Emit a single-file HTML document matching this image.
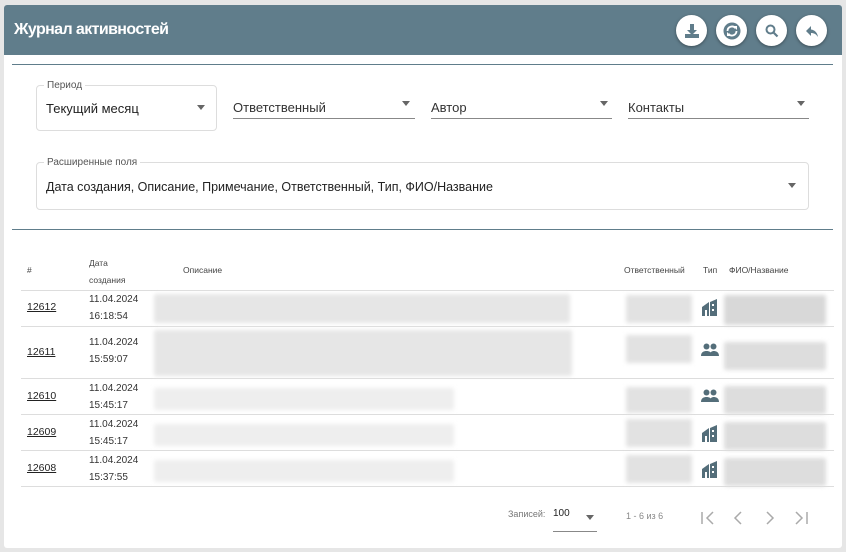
<!DOCTYPE html>
<html><head><meta charset="utf-8"><style>
*{box-sizing:border-box;margin:0;padding:0}
body{width:846px;height:552px;background:#e6e6e6;font-family:"Liberation Sans",sans-serif;position:relative;overflow:hidden;color:#222}
.card{position:absolute;left:4px;top:5px;width:838px;height:543px;background:#fff;border-radius:3px;overflow:hidden}
.hdr{position:absolute;left:0;top:0;width:838px;height:50px;background:#607d8b}
.hdr h1{position:absolute;left:10px;top:16px;font-size:16px;color:#fff;font-weight:bold;letter-spacing:-0.6px}
.btn{position:absolute;top:10px;width:31px;height:31px;border-radius:50%;background:#fff;box-shadow:0 1px 3px rgba(0,0,0,.4);display:flex;align-items:center;justify-content:center}
.line{position:absolute;height:1px;background:#607d8b}
.abs{position:absolute}
.lbl{font-size:10px;color:#555}
.sel{position:absolute;border-bottom:1px solid #888;font-size:13px;color:#333;height:25px}
.arr{position:absolute;width:0;height:0;border-left:4px solid transparent;border-right:4px solid transparent;border-top:5px solid #666}
.outl{position:absolute;border:1px solid #ddd;border-radius:4px}
.th{position:absolute;font-size:8.5px;color:#444}
.row{position:absolute;left:17px;width:813px;border-top:1px solid #ddd}
.blur{position:absolute;background:#ddd;filter:blur(2px);border-radius:2px}
.id{position:absolute;left:23px;font-size:10.5px;text-decoration:underline;color:#222}
.dt{position:absolute;left:85px;font-size:10px;color:#333;line-height:17px}
</style></head><body>
<div class="card">
<div class="hdr"><h1>Журнал активностей</h1>
<div class="btn" style="left:672px"><svg width="18" height="18" viewBox="0 0 18 18"><path d="M7 2h4v6h3l-5 5-5-5h3z" fill="#607d8b"/><rect x="2" y="12" width="14" height="4" fill="#607d8b"/></svg></div>
<div class="btn" style="left:712px"><svg width="20" height="20" viewBox="0 0 20 20"><circle cx="10" cy="10" r="8.5" fill="#607d8b"/><path d="M5.5 10a4.5 4.5 0 0 1 8-2.8M14.5 10a4.5 4.5 0 0 1-8 2.8" stroke="#fff" stroke-width="1.8" fill="none"/><path d="M11 5h4v4zM9 15H5v-4z" fill="#fff"/></svg></div>
<div class="btn" style="left:752px"><svg width="14" height="14" viewBox="0 0 14 14"><circle cx="5.5" cy="5.5" r="4" stroke="#607d8b" stroke-width="2" fill="none"/><path d="M8.5 8.5l4 4" stroke="#607d8b" stroke-width="2.2"/></svg></div>
<div class="btn" style="left:792px"><svg width="16" height="16" viewBox="0 0 16 16"><path d="M7 3L2 8l5 5V10c3 0 5 1 7 4-0.5-4-3-7-7-7.5z" fill="#607d8b"/></svg></div>
</div>
<div class="line" style="left:8px;top:59px;width:821px"></div>
<div class="outl" style="left:32px;top:80px;width:181px;height:46px"></div>
<div class="abs lbl" style="left:40px;top:75px;background:#fff;padding:0 3px">Период</div>
<div class="abs" style="left:42px;top:96px;font-size:13px">Текущий месяц</div>
<div class="arr" style="left:193px;top:100px"></div>
<div class="sel" style="left:229px;top:89px;width:182px;padding-top:6px">Ответственный</div><div class="arr" style="left:398px;top:96px"></div>
<div class="sel" style="left:427px;top:89px;width:181px;padding-top:6px">Автор</div><div class="arr" style="left:596px;top:96px"></div>
<div class="sel" style="left:624px;top:89px;width:181px;padding-top:6px">Контакты</div><div class="arr" style="left:793px;top:96px"></div>
<div class="outl" style="left:32px;top:157px;width:773px;height:48px"></div>
<div class="abs lbl" style="left:40px;top:152px;background:#fff;padding:0 3px">Расширенные поля</div>
<div class="abs" style="left:42px;top:175px;font-size:12.5px">Дата создания, Описание, Примечание, Ответственный, Тип, ФИО/Название</div>
<div class="arr" style="left:784px;top:178px"></div>
<div class="line" style="left:8px;top:224px;width:821px"></div>
<div class="th" style="left:23px;top:260px">#</div>
<div class="th" style="left:85px;top:250px;line-height:17px">Дата<br>создания</div>
<div class="th" style="left:179px;top:260px">Описание</div>
<div class="th" style="left:620px;top:260px">Ответственный</div>
<div class="th" style="left:699px;top:260px">Тип</div>
<div class="th" style="left:725px;top:260px">ФИО/Название</div>
<div class="row" style="top:285px;height:36px"></div>
<div class="row" style="top:321px;height:52px"></div>
<div class="row" style="top:373px"></div>
<div class="row" style="top:409px"></div>
<div class="row" style="top:445px"></div>
<div class="row" style="top:481px"></div>
<div class="id" style="top:296px">12612</div><div class="dt" style="top:286px">11.04.2024<br>16:18:54</div>
<div class="id" style="top:341px">12611</div><div class="dt" style="top:329px">11.04.2024<br>15:59:07</div>
<div class="id" style="top:385px">12610</div><div class="dt" style="top:375px">11.04.2024<br>15:45:17</div>
<div class="id" style="top:421px">12609</div><div class="dt" style="top:411px">11.04.2024<br>15:45:17</div>
<div class="id" style="top:457px">12608</div><div class="dt" style="top:447px">11.04.2024<br>15:37:55</div>
<div class="blur" style="left:150px;top:289px;width:416px;height:29px;background:#e6e6e6"></div>
<div class="blur" style="left:150px;top:325px;width:418px;height:46px;background:#e6e6e6"></div>
<div class="blur" style="left:150px;top:383px;width:300px;height:22px;background:#eeeeee"></div>
<div class="blur" style="left:150px;top:419px;width:300px;height:22px;background:#eeeeee"></div>
<div class="blur" style="left:150px;top:455px;width:300px;height:22px;background:#eeeeee"></div>
<div class="blur" style="left:622px;top:290px;width:66px;height:28px;background:#e2e2e2"></div>
<div class="blur" style="left:622px;top:330px;width:66px;height:28px;background:#e2e2e2"></div>
<div class="blur" style="left:622px;top:382px;width:66px;height:26px;background:#e2e2e2"></div>
<div class="blur" style="left:622px;top:414px;width:66px;height:28px;background:#e2e2e2"></div>
<div class="blur" style="left:622px;top:450px;width:66px;height:28px;background:#e2e2e2"></div>
<div class="blur" style="left:720px;top:290px;width:102px;height:30px;background:#d8d8d8"></div>
<div class="blur" style="left:720px;top:337px;width:102px;height:28px"></div>
<div class="blur" style="left:720px;top:381px;width:102px;height:28px"></div>
<div class="blur" style="left:720px;top:417px;width:102px;height:28px"></div>
<div class="blur" style="left:720px;top:453px;width:102px;height:28px"></div>
<svg class="abs" style="left:697px;top:294px" width="18" height="18" viewBox="0 0 18 18"><path d="M1 8l7-5v14H1zM9 3l7-3v17H9z" fill="#546e7a"/><rect x="4" y="11" width="2" height="6" fill="#fff"/><rect x="11" y="5" width="2" height="2" fill="#fff"/><rect x="11" y="10" width="2" height="2" fill="#fff"/></svg>
<svg class="abs" style="left:697px;top:338px" width="18" height="14" viewBox="0 0 18 14"><circle cx="5.5" cy="3.5" r="3" fill="#546e7a"/><circle cx="12.5" cy="3.5" r="3" fill="#546e7a"/><path d="M0 13c0-4 3-5 5.5-5s5.5 1 5.5 5zM9 13c0-3 1-4 1-4 1-.7 2-1 2.5-1 2.5 0 5.5 1 5.5 5z" fill="#546e7a"/></svg>
<svg class="abs" style="left:697px;top:384px" width="18" height="14" viewBox="0 0 18 14"><circle cx="5.5" cy="3.5" r="3" fill="#546e7a"/><circle cx="12.5" cy="3.5" r="3" fill="#546e7a"/><path d="M0 13c0-4 3-5 5.5-5s5.5 1 5.5 5zM9 13c0-3 1-4 1-4 1-.7 2-1 2.5-1 2.5 0 5.5 1 5.5 5z" fill="#546e7a"/></svg>
<svg class="abs" style="left:697px;top:420px" width="18" height="18" viewBox="0 0 18 18"><path d="M1 8l7-5v14H1zM9 3l7-3v17H9z" fill="#546e7a"/><rect x="4" y="11" width="2" height="6" fill="#fff"/><rect x="11" y="5" width="2" height="2" fill="#fff"/><rect x="11" y="10" width="2" height="2" fill="#fff"/></svg>
<svg class="abs" style="left:697px;top:456px" width="18" height="18" viewBox="0 0 18 18"><path d="M1 8l7-5v14H1zM9 3l7-3v17H9z" fill="#546e7a"/><rect x="4" y="11" width="2" height="6" fill="#fff"/><rect x="11" y="5" width="2" height="2" fill="#fff"/><rect x="11" y="10" width="2" height="2" fill="#fff"/></svg>
<div class="abs" style="left:504px;top:504px;font-size:9px;color:#777">Записей:</div>
<div class="abs" style="left:549px;top:503px;font-size:10px;color:#222">100</div>
<div class="abs" style="left:549px;top:526px;width:44px;height:1px;background:#888"></div>
<div class="arr" style="left:582px;top:510px"></div>
<div class="abs" style="left:622px;top:506px;font-size:9px;color:#888">1 - 6 из 6</div>
<svg class="abs" style="left:695px;top:505px" width="120" height="16" viewBox="0 0 120 16" fill="none" stroke="#aaa" stroke-width="1.5"><path d="M3 2v12M14 2l-6 6 6 6M42 2l-6 6 6 6M68 2l6 6-6 6M97 2l6 6-6 6M108 2v12"/></svg>
</div>
</body></html>
